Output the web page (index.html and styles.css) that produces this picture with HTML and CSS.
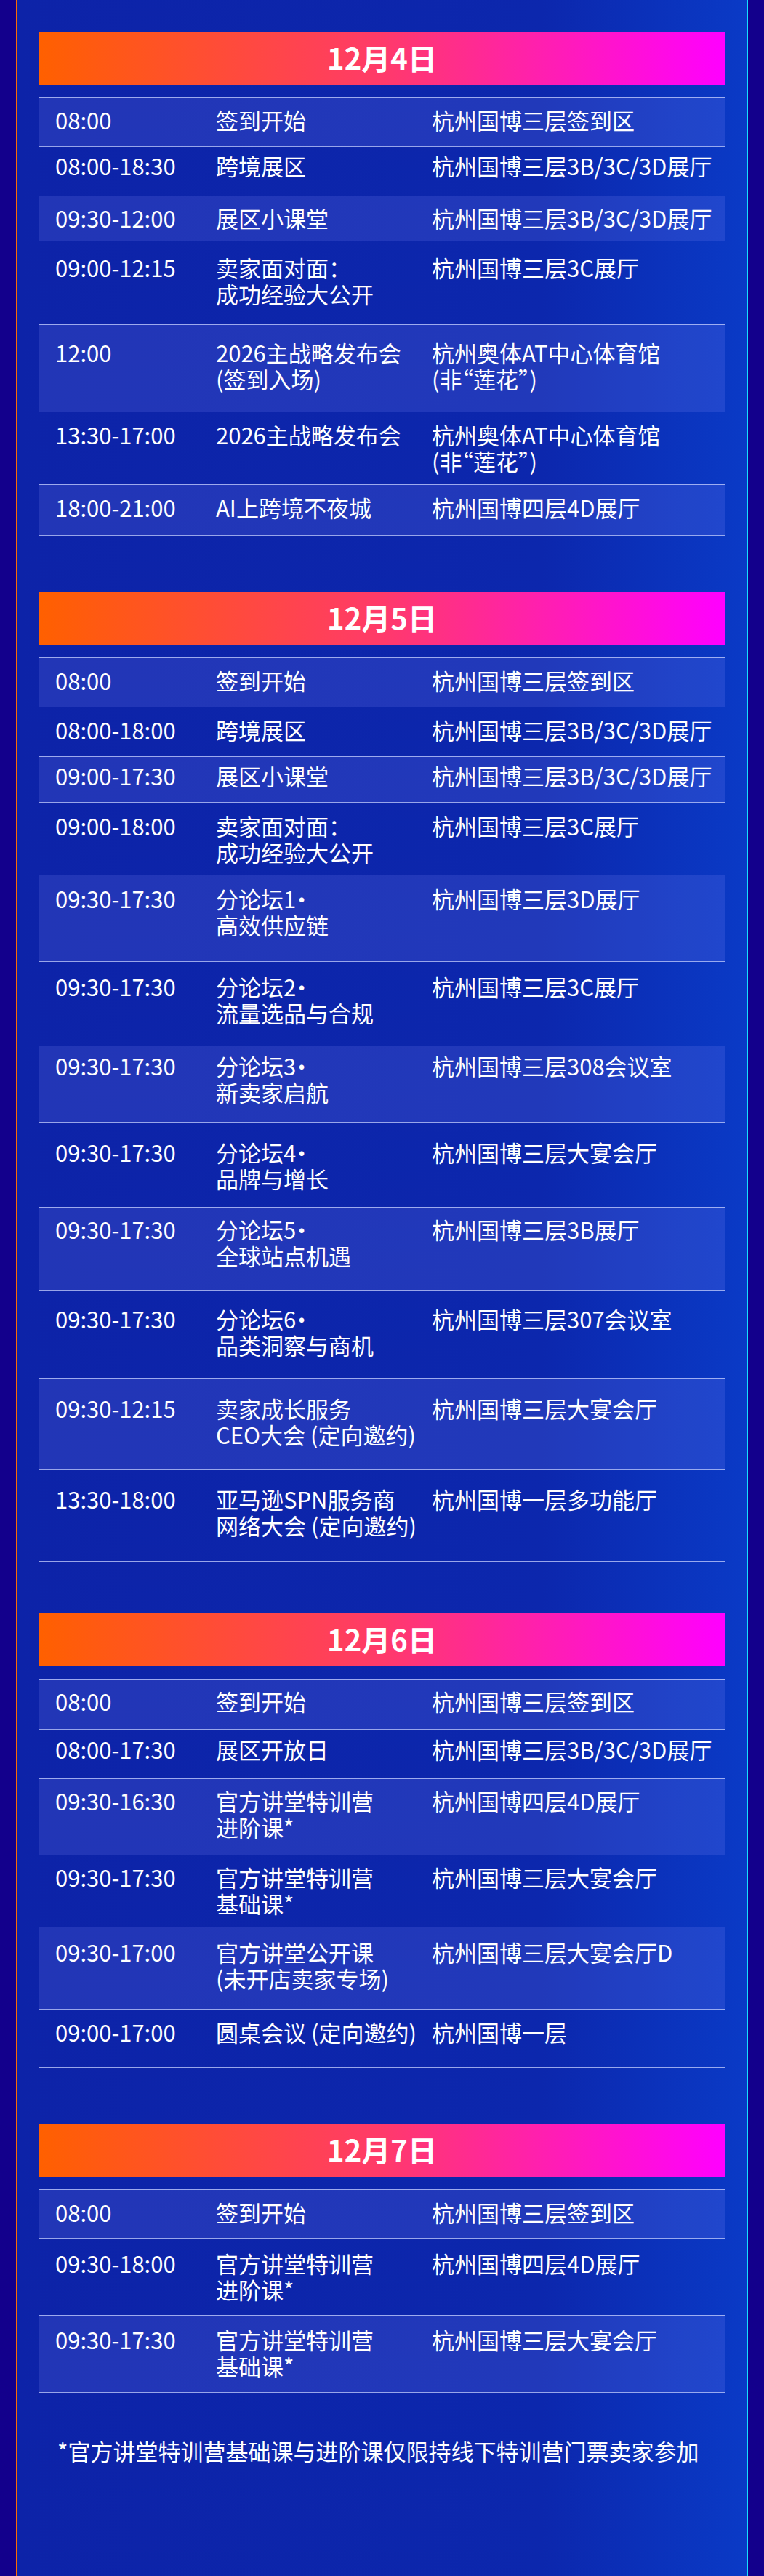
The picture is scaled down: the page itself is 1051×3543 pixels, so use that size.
FILE: index.html
```html
<!DOCTYPE html>
<html lang="zh-CN">
<head>
<meta charset="utf-8">
<title>日程</title>
<link rel="stylesheet" href="styles.css">
</head>
<body>
<div class="page">
  <main class="panel">
    <section class="day">
      <h2 class="day-head">12月4日</h2>
      <div class="table">
        <div class="row shade h67 p12"><div class="c-time">08:00</div><div class="c-event">签到开始</div><div class="c-place">杭州国博三层签到区</div></div>
        <div class="row h68 p8"><div class="c-time">08:00-18:30</div><div class="c-event">跨境展区</div><div class="c-place">杭州国博三层3B/3C/3D展厅</div></div>
        <div class="row shade h62 p12"><div class="c-time">09:30-12:00</div><div class="c-event">展区小课堂</div><div class="c-place">杭州国博三层3B/3C/3D展厅</div></div>
        <div class="row h115 p18"><div class="c-time">09:00-12:15</div><div class="c-event">卖家面对面：<br>成功经验大公开</div><div class="c-place">杭州国博三层3C展厅</div></div>
        <div class="row shade h120 p20"><div class="c-time">12:00</div><div class="c-event">2026主战略发布会<br>(签到入场)</div><div class="c-place">杭州奥体AT中心体育馆<br>(非“莲花”)</div></div>
        <div class="row h100 p13"><div class="c-time">13:30-17:00</div><div class="c-event">2026主战略发布会</div><div class="c-place">杭州奥体AT中心体育馆<br>(非“莲花”)</div></div>
        <div class="row shade h70 p13"><div class="c-time">18:00-21:00</div><div class="c-event">AI上跨境不夜城</div><div class="c-place">杭州国博四层4D展厅</div></div>
      </div>
    </section>

    <section class="day">
      <h2 class="day-head">12月5日</h2>
      <div class="table">
        <div class="row shade h68 p13"><div class="c-time">08:00</div><div class="c-event">签到开始</div><div class="c-place">杭州国博三层签到区</div></div>
        <div class="row h68 p13"><div class="c-time">08:00-18:00</div><div class="c-event">跨境展区</div><div class="c-place">杭州国博三层3B/3C/3D展厅</div></div>
        <div class="row shade h63 p8"><div class="c-time">09:00-17:30</div><div class="c-event">展区小课堂</div><div class="c-place">杭州国博三层3B/3C/3D展厅</div></div>
        <div class="row h100 p14"><div class="c-time">09:00-18:00</div><div class="c-event">卖家面对面：<br>成功经验大公开</div><div class="c-place">杭州国博三层3C展厅</div></div>
        <div class="row shade h119 p14"><div class="c-time">09:30-17:30</div><div class="c-event">分论坛1·<br>高效供应链</div><div class="c-place">杭州国博三层3D展厅</div></div>
        <div class="row h116 p16"><div class="c-time">09:30-17:30</div><div class="c-event">分论坛2·<br>流量选品与合规</div><div class="c-place">杭州国博三层3C展厅</div></div>
        <div class="row shade h105 p9"><div class="c-time">09:30-17:30</div><div class="c-event">分论坛3·<br>新卖家启航</div><div class="c-place">杭州国博三层308会议室</div></div>
        <div class="row h117 p23"><div class="c-time">09:30-17:30</div><div class="c-event">分论坛4·<br>品牌与增长</div><div class="c-place">杭州国博三层大宴会厅</div></div>
        <div class="row shade h114 p12"><div class="c-time">09:30-17:30</div><div class="c-event">分论坛5·<br>全球站点机遇</div><div class="c-place">杭州国博三层3B展厅</div></div>
        <div class="row h121 p21"><div class="c-time">09:30-17:30</div><div class="c-event">分论坛6·<br>品类洞察与商机</div><div class="c-place">杭州国博三层307会议室</div></div>
        <div class="row shade h126 p23"><div class="c-time">09:30-12:15</div><div class="c-event">卖家成长服务<br>CEO大会 (定向邀约)</div><div class="c-place">杭州国博三层大宴会厅</div></div>
        <div class="row h126 p22"><div class="c-time">13:30-18:00</div><div class="c-event">亚马逊SPN服务商<br>网络大会 (定向邀约)</div><div class="c-place">杭州国博一层多功能厅</div></div>
      </div>
    </section>

    <section class="day day-tight">
      <h2 class="day-head">12月6日</h2>
      <div class="table">
        <div class="row shade h69 p12"><div class="c-time">08:00</div><div class="c-event">签到开始</div><div class="c-place">杭州国博三层签到区</div></div>
        <div class="row h68 p9"><div class="c-time">08:00-17:30</div><div class="c-event">展区开放日</div><div class="c-place">杭州国博三层3B/3C/3D展厅</div></div>
        <div class="row shade h105 p12"><div class="c-time">09:30-16:30</div><div class="c-event">官方讲堂特训营<br>进阶课*</div><div class="c-place">杭州国博四层4D展厅</div></div>
        <div class="row h99 p12"><div class="c-time">09:30-17:30</div><div class="c-event">官方讲堂特训营<br>基础课*</div><div class="c-place">杭州国博三层大宴会厅</div></div>
        <div class="row shade h113 p16"><div class="c-time">09:30-17:00</div><div class="c-event">官方讲堂公开课<br>(未开店卖家专场)</div><div class="c-place">杭州国博三层大宴会厅D</div></div>
        <div class="row h80 p13"><div class="c-time">09:00-17:00</div><div class="c-event">圆桌会议 (定向邀约)</div><div class="c-place">杭州国博一层</div></div>
      </div>
    </section>

    <section class="day">
      <h2 class="day-head">12月7日</h2>
      <div class="table">
        <div class="row shade h67 p13"><div class="c-time">08:00</div><div class="c-event">签到开始</div><div class="c-place">杭州国博三层签到区</div></div>
        <div class="row h106 p16"><div class="c-time">09:30-18:00</div><div class="c-event">官方讲堂特训营<br>进阶课*</div><div class="c-place">杭州国博四层4D展厅</div></div>
        <div class="row shade h106 p15"><div class="c-time">09:30-17:30</div><div class="c-event">官方讲堂特训营<br>基础课*</div><div class="c-place">杭州国博三层大宴会厅</div></div>
      </div>
    </section>

    <p class="note">*官方讲堂特训营基础课与进阶课仅限持线下特训营门票卖家参加</p>
  </main>
</div>
</body>
</html>
```

FILE: styles.css
```css
html, body {
  margin: 0;
  padding: 0;
}

body {
  background: #13008c;
  font-family: "Noto Sans CJK SC", "Noto Sans", sans-serif;
  color: #ffffff;
}

.page {
  width: 1051px;
  min-height: 3543px;
}

.panel {
  box-sizing: border-box;
  margin-left: 22px;
  width: 1007px;
  min-height: 3543px;
  padding: 44px 30px 0 30px;
  border-left: 2px solid #ff6a00;
  border-right: 2px solid #14e0ff;
  background: linear-gradient(90deg, #0d23a8 0%, #0c27ad 72%, #0a3ac6 100%);
  display: flex;
  flex-direction: column;
}

.day + .day {
  margin-top: 77px;
}

.day-tight.day {
  margin-top: 71px;
}

.day-head {
  margin: 0 0 17px 0;
  height: 73px;
  display: flex;
  align-items: center;
  justify-content: center;
  padding-bottom: 4px;
  box-sizing: border-box;
  background: linear-gradient(90deg, #ff6000 0%, #ff3a6a 50%, #ff00ff 100%);
  font-size: 40px;
  font-weight: 700;
  line-height: 1;
  color: #ffffff;
}

.table {
  border-bottom: 1px solid rgba(200, 210, 255, 0.75);
}

.row {
  box-sizing: border-box;
  display: grid;
  grid-template-columns: 223px 317px 1fr;
  border-top: 1px solid rgba(200, 210, 255, 0.75);
  font-size: 31px;
  line-height: 36px;
  white-space: nowrap;
  font-feature-settings: "halt";
}

.row > div {
  padding-top: var(--pt, 12px);
}

.shade {
  background: rgba(140, 150, 255, 0.17);
}

.c-time {
  padding-left: 22px;
  border-right: 1px solid rgba(200, 210, 255, 0.75);
}

.c-event {
  padding-left: 20px;
}

.c-place {
  padding-left: 0;
}

.note {
  margin: 62px 0 0 0;
  padding-left: 25px;
  font-size: 31px;
  line-height: 36px;
  white-space: nowrap;
}

/* row heights */
.h62 { height: 62px; }
.h63 { height: 63px; }
.h67 { height: 67px; }
.h68 { height: 68px; }
.h69 { height: 69px; }
.h70 { height: 70px; }
.h80 { height: 80px; }
.h99 { height: 99px; }
.h100 { height: 100px; }
.h105 { height: 105px; }
.h106 { height: 106px; }
.h113 { height: 113px; }
.h114 { height: 114px; }
.h115 { height: 115px; }
.h116 { height: 116px; }
.h117 { height: 117px; }
.h119 { height: 119px; }
.h120 { height: 120px; }
.h121 { height: 121px; }
.h126 { height: 126px; }

/* text offsets inside rows */
.p8 { --pt: 8px; }
.p9 { --pt: 9px; }
.p12 { --pt: 12px; }
.p13 { --pt: 13px; }
.p14 { --pt: 14px; }
.p15 { --pt: 15px; }
.p16 { --pt: 16px; }
.p18 { --pt: 18px; }
.p20 { --pt: 20px; }
.p21 { --pt: 21px; }
.p22 { --pt: 22px; }
.p23 { --pt: 23px; }
```
